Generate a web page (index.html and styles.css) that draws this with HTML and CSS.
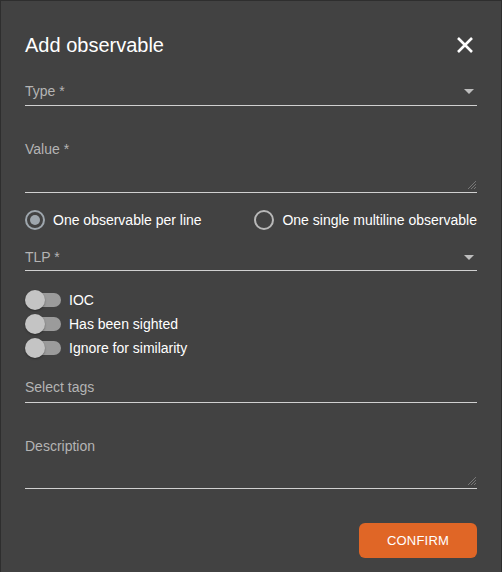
FILE: index.html
```html
<!DOCTYPE html>
<html>
<head>
<meta charset="utf-8">
<link rel="stylesheet" href="styles.css">
</head>
<body>
<div class="dialog">
  <div class="header">
    <h1 class="title">Add observable</h1>
    <svg class="close" width="18" height="18" viewBox="0 0 18 18"><path d="M2 2 L16 16 M16 2 L2 16" stroke="#fff" stroke-width="2.6"/></svg>
  </div>
  <div class="field select f-type">
    <span class="label">Type *</span>
    <svg class="caret" width="10" height="5" viewBox="0 0 10 5"><path d="M0 0 H10 L5 5 Z" fill="#bdbdbd"/></svg>
  </div>
  <div class="field area f-value">
    <span class="label">Value *</span>
    <svg class="grip" width="8" height="8" viewBox="0 0 8 8"><path d="M8 0 L0 8 M8 3 L3 8 M8 6 L6 8" stroke="#777" stroke-width="1"/></svg>
  </div>
  <div class="radios">
    <label class="radio"><span class="dot on"></span>One observable per line</label>
    <label class="radio"><span class="dot"></span>One single multiline observable</label>
  </div>
  <div class="field select f-tlp">
    <span class="label">TLP *</span>
    <svg class="caret" width="10" height="5" viewBox="0 0 10 5"><path d="M0 0 H10 L5 5 Z" fill="#bdbdbd"/></svg>
  </div>
  <div class="toggles">
    <div class="toggle"><span class="switch"><span class="thumb"></span></span>IOC</div>
    <div class="toggle"><span class="switch"><span class="thumb"></span></span>Has been sighted</div>
    <div class="toggle"><span class="switch"><span class="thumb"></span></span>Ignore for similarity</div>
  </div>
  <div class="field select f-tags">
    <span class="label">Select tags</span>
  </div>
  <div class="field area f-desc">
    <span class="label">Description</span>
    <svg class="grip" width="8" height="8" viewBox="0 0 8 8"><path d="M8 0 L0 8 M8 3 L3 8 M8 6 L6 8" stroke="#777" stroke-width="1"/></svg>
  </div>
  <div class="actions">
    <button class="confirm">CONFIRM</button>
  </div>
</div>
</body>
</html>
```
FILE: styles.css
```css
html, body {
  margin: 0;
  padding: 0;
  background: #424242;
}
body {
  font-family: "Liberation Sans", Arial, sans-serif;
  color: #fff;
}
.dialog {
  box-sizing: border-box;
  width: 502px;
  height: 572px;
  background: #424242;
  border: 1px solid #2e2e2e;
  border-bottom: none;
  padding: 0 24px 0 24px;
  display: flex;
  flex-direction: column;
}
.header {
  display: flex;
  align-items: center;
  justify-content: space-between;
  height: 30px;
  margin-top: 29px;
}
.title {
  margin: 0;
  font-size: 20px;
  font-weight: normal;
  color: #fff;
  letter-spacing: 0;
}
.close {
  margin-right: 3px;
}
.field {
  position: relative;
  border-bottom: 1px solid #d0d0d0;
  display: flex;
  align-items: flex-start;
  justify-content: space-between;
}
.label {
  font-size: 14px;
  color: #b4b4b4;
  line-height: 16px;
}
.f-type {
  margin-top: 23px;
  height: 22px;
}
.caret {
  margin-top: 6px;
  margin-right: 3px;
}
.f-value {
  margin-top: 35px;
  height: 51px;
}
.grip {
  position: absolute;
  right: 1px;
  bottom: 3px;
}
.radios {
  display: flex;
  justify-content: space-between;
  margin-top: 16px;
  height: 22px;
  align-items: center;
}
.radio {
  display: flex;
  align-items: center;
  font-size: 14px;
  color: #fff;
  gap: 8px;
}
.dot {
  box-sizing: border-box;
  width: 20px;
  height: 20px;
  border-radius: 50%;
  border: 2px solid #b8b8b8;
  position: relative;
}
.dot.on {
  border-color: #9ea6ad;
}
.dot.on::after {
  content: "";
  position: absolute;
  left: 3px;
  top: 3px;
  width: 10px;
  height: 10px;
  border-radius: 50%;
  background: #9ea6ad;
}
.f-tlp {
  margin-top: 18px;
  height: 21px;
}
.toggles {
  margin-top: 19px;
  display: flex;
  flex-direction: column;
  gap: 4px;
}
.toggle {
  display: flex;
  align-items: center;
  gap: 8px;
  font-size: 14px;
  height: 20px;
}
.switch {
  position: relative;
  width: 36px;
  height: 20px;
  display: flex;
  align-items: center;
}
.switch::before {
  content: "";
  position: absolute;
  left: 2px;
  right: 0;
  height: 14px;
  border-radius: 7px;
  background: #9b9b9b;
}
.thumb {
  position: relative;
  width: 20px;
  height: 20px;
  border-radius: 50%;
  background: #c4c4c4;
  box-shadow: 0 1px 2px rgba(0,0,0,0.35);
}
.f-tags {
  margin-top: 21px;
  height: 23px;
}
.f-desc {
  margin-top: 35px;
  height: 50px;
}
.actions {
  display: flex;
  justify-content: flex-end;
  margin-top: 34px;
}
.confirm {
  width: 118px;
  height: 35px;
  background: #e06626;
  color: #fff;
  border: none;
  border-radius: 6px;
  font-family: "Liberation Sans", Arial, sans-serif;
  font-size: 13px;
  letter-spacing: 0.2px;
  padding: 0;
}
```
